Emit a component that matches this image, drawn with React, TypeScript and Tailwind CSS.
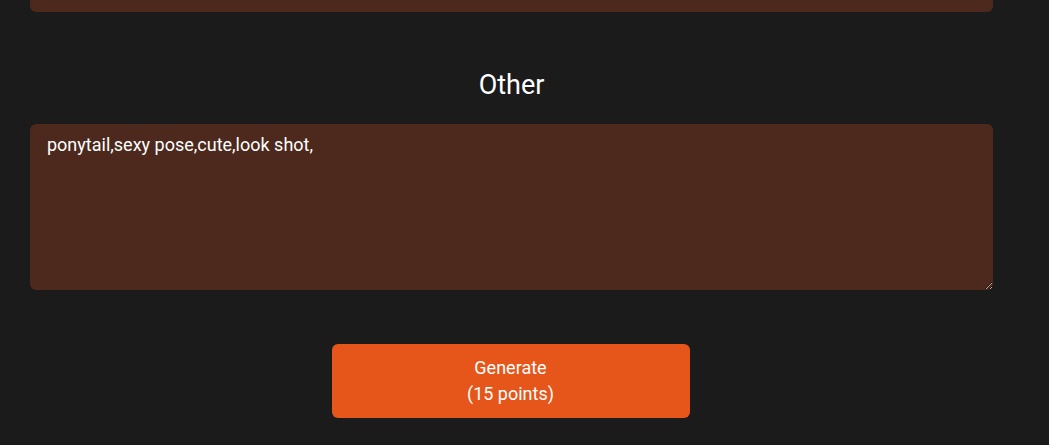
import React from "react";

const App: React.FC = () => {
    return (
        <div
            className="min-h-[445px] w-full bg-[#1b1b1b] text-white"
            style={{ fontFamily: "Roboto, 'Noto Sans', sans-serif" }}
        >
            <div className="ml-[30px] flex w-[963px] flex-col items-center">
                {/* tail of the previous field */}
                <div className="h-[12px] w-full rounded-b-[6px] bg-[#4c291c]" />

                <h2 className="mt-[58px] text-[27px] leading-[30px] font-normal text-white">Other</h2>

                <textarea
                    className="mt-[24px] block h-[166px] w-full resize-y rounded-[6px] bg-[#4c291c] pt-[9px] pr-[16px] pl-[17px] text-[18px] leading-[24px] text-white outline-none [color-scheme:dark]"
                    defaultValue="ponytail,sexy pose,cute,look shot,"
                />

                <button className="mt-[54px] w-[358px] -translate-x-px rounded-[6px] bg-[#e6561a] py-[11px] text-[18px] leading-[26px] text-white">
                    Generate
                    <br />
                    (15 points)
                </button>
            </div>
        </div>
    );
};

export default App;
